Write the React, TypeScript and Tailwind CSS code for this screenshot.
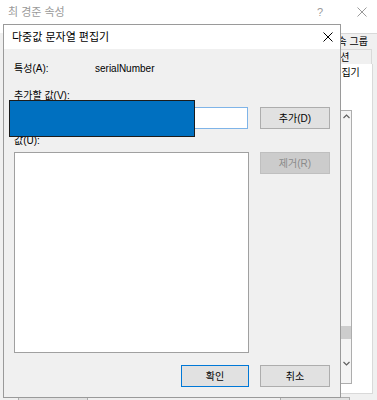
const font = "font-['Liberation_Sans','Noto_Sans_CJK_KR',sans-serif]"

function CloseGlyph({ color = '#000', size = 10 }: { color?: string; size?: number }) {
  return (
    <svg width={size} height={size} viewBox="0 0 10 10" className="block">
      <path d="M0.5 0.5 L9.5 9.5 M9.5 0.5 L0.5 9.5" stroke={color} strokeWidth="1" fill="none" />
    </svg>
  )
}

function WinButton({
  label,
  width = 'w-[70px]',
  disabled = false,
  primary = false,
}: {
  label: string
  width?: string
  disabled?: boolean
  primary?: boolean
}) {
  return (
    <div
      className={`h-[22px] ${width} shrink-0 flex items-center justify-center border text-[10px] ${
        disabled
          ? 'bg-[#cccccc] border-[#bfbfbf] text-[#8a8a8a]'
          : primary
          ? 'bg-[#e1e1e1] border-[#0078d7] text-black'
          : 'bg-[#e1e1e1] border-[#adadad] text-black'
      }`}
    >
      {label}
    </div>
  )
}

// the parent "properties" window, mostly hidden behind the editor dialog
function ParentWindow() {
  return (
    <div className="flex flex-col">
      {/* title bar */}
      <div className="h-[33px] shrink-0 bg-white flex items-start pt-[4px] pl-[8px] pr-[10px] text-[11px] text-[#9a9a9a]">
        <span className="flex-1">최 경준 속성</span>
        <span className="mr-[34px] leading-[16px]">?</span>
        <div className="pt-[3px]">
          <CloseGlyph color="#9a9a9a" />
        </div>
      </div>

      {/* tab rows */}
      <div className="shrink-0 pl-[8px] text-[10px] text-black whitespace-nowrap">
        <div className="h-[16px] border-t border-l border-[#d9d9d9] flex items-center justify-end pr-[9px]">
          <span className="border-l border-[#d9d9d9] pl-[4px]">소속 그룹</span>
        </div>
        <div className="h-[15px] mr-[5px] border-t border-x border-[#d9d9d9] flex items-center pl-[322px]">
          <span>세션</span>
        </div>
      </div>

      {/* white tab panel */}
      <div className="shrink-0 ml-[8px] mr-[4px] h-[330px] bg-white border-x border-b border-[#d9d9d9] flex flex-col text-[10px]">
        <div className="h-[16px] flex items-center pl-[302px] whitespace-nowrap">특성 편집기</div>
        <div className="mt-[30px] mr-[20px] h-[274px] flex justify-end">
          {/* attribute list scrollbar */}
          <div className="w-[12px] h-full border border-[#adadad] bg-[#f4f4f4] flex flex-col items-center pt-[3px] pb-[17px]">
            <svg width="7" height="5" viewBox="0 0 7 5">
              <path d="M0.5 4 L3.5 1 L6.5 4" stroke="#606060" strokeWidth="1.2" fill="none" />
            </svg>
            <div className="flex-1" />
            <div className="w-[10px] h-[13px] bg-[#cdcdcd]" />
            <div className="h-[22px]" />
            <svg width="7" height="5" viewBox="0 0 7 5">
              <path d="M0.5 1 L3.5 4 L6.5 1" stroke="#606060" strokeWidth="1.2" fill="none" />
            </svg>
          </div>
        </div>
      </div>

      {/* parent buttons peeking under the dialog */}
      <div className="shrink-0 mt-[3px] flex justify-between pl-[18px] pr-[27px]">
        <div className="w-[70px] h-[22px] bg-[#e1e1e1] border border-[#adadad]" />
        <div className="w-[70px] h-[22px] bg-[#e1e1e1] border border-[#adadad]" />
      </div>
    </div>
  )
}

function EditorDialog() {
  return (
    <div className="absolute left-[3px] top-[24px] w-[338px] h-[374px] border border-[#9a9a9a] bg-[#f0f0f0] flex flex-col">
      <div className="h-[24px] shrink-0 bg-white flex items-center justify-between pl-[8px] pr-[7px] text-[11px] text-black">
        <span>다중값 문자열 편집기</span>
        <CloseGlyph />
      </div>

      <div className="flex-1 flex flex-col px-[10px] pb-[10px] text-[10px] text-black">
        <div className="mt-[11px] h-[16px] flex items-center">
          <span className="w-[81px]">특성(A):</span>
          <span>serialNumber</span>
        </div>

        <div className="mt-[11px] h-[16px] flex items-center">추가할 값(V):</div>

        <div className="mt-[4px] flex gap-[12px]">
          <div className="w-[234px] h-[22px] bg-white border border-[#7fb4e8]" />
          <WinButton label="추가(D)" />
        </div>

        <div className="mt-[3px] h-[16px] flex items-center">값(U):</div>

        <div className="mt-[4px] flex gap-[11px] items-start">
          <div className="w-[235px] h-[201px] bg-white border border-[#a0a0a0]" />
          <WinButton label="제거(R)" disabled />
        </div>

        <div className="mt-auto flex justify-end gap-[11px]">
          <WinButton label="확인" width="w-[68px]" primary />
          <WinButton label="취소" />
        </div>
      </div>
    </div>
  )
}

export default function App() {
  return (
    <div className={`relative w-[377px] h-[400px] overflow-hidden bg-[#f0f0f0] ${font}`}>
      <ParentWindow />
      <EditorDialog />
      {/* redaction block over the value field */}
      <div className="absolute left-[9px] top-[100px] w-[186px] h-[37px] bg-[#0070c0] border border-[#1c1c1c]" />
    </div>
  )
}
